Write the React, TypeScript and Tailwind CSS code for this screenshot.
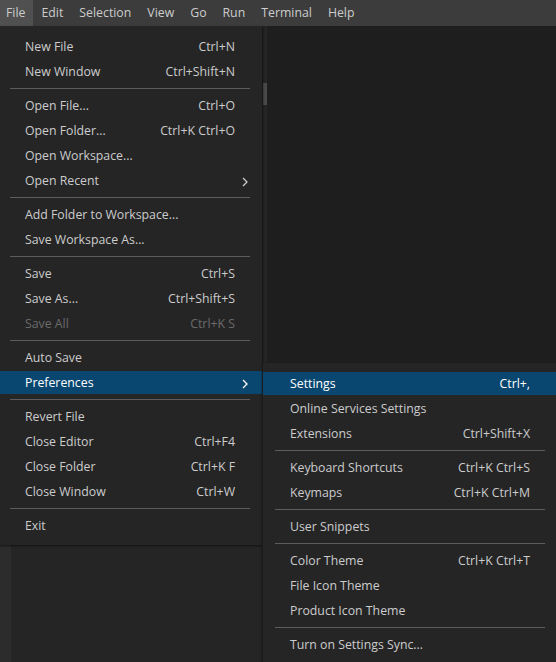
import React from 'react'

type Item =
  | { sep: true }
  | { label: string; keys?: string; sub?: boolean; active?: boolean; disabled?: boolean }

const FONT = '"Open Sans", "Noto Sans", sans-serif'

const menuBar = ['File', 'Edit', 'Selection', 'View', 'Go', 'Run', 'Terminal', 'Help']

const fileMenu: Item[] = [
  { label: 'New File', keys: 'Ctrl+N' },
  { label: 'New Window', keys: 'Ctrl+Shift+N' },
  { sep: true },
  { label: 'Open File...', keys: 'Ctrl+O' },
  { label: 'Open Folder...', keys: 'Ctrl+K Ctrl+O' },
  { label: 'Open Workspace...' },
  { label: 'Open Recent', sub: true },
  { sep: true },
  { label: 'Add Folder to Workspace...' },
  { label: 'Save Workspace As...' },
  { sep: true },
  { label: 'Save', keys: 'Ctrl+S' },
  { label: 'Save As...', keys: 'Ctrl+Shift+S' },
  { label: 'Save All', keys: 'Ctrl+K S', disabled: true },
  { sep: true },
  { label: 'Auto Save' },
  { label: 'Preferences', sub: true, active: true },
  { sep: true },
  { label: 'Revert File' },
  { label: 'Close Editor', keys: 'Ctrl+F4' },
  { label: 'Close Folder', keys: 'Ctrl+K F' },
  { label: 'Close Window', keys: 'Ctrl+W' },
  { sep: true },
  { label: 'Exit' },
]

const prefsMenu: Item[] = [
  { label: 'Settings', keys: 'Ctrl+,', active: true },
  { label: 'Online Services Settings' },
  { label: 'Extensions', keys: 'Ctrl+Shift+X' },
  { sep: true },
  { label: 'Keyboard Shortcuts', keys: 'Ctrl+K Ctrl+S' },
  { label: 'Keymaps', keys: 'Ctrl+K Ctrl+M' },
  { sep: true },
  { label: 'User Snippets' },
  { sep: true },
  { label: 'Color Theme', keys: 'Ctrl+K Ctrl+T' },
  { label: 'File Icon Theme' },
  { label: 'Product Icon Theme' },
  { sep: true },
  { label: 'Turn on Settings Sync...' },
]

function Chevron() {
  return (
    <svg width="6" height="10" viewBox="0 0 6 10" fill="none">
      <path d="M1 1 L5 5 L1 9" stroke="currentColor" strokeWidth="1.3" />
    </svg>
  )
}

function MenuRows({ items }: { items: Item[] }) {
  return (
    <>
      {items.map((item, i) => {
        if ('sep' in item) {
          return (
            <div key={i} className="flex h-[9px] items-center px-[12px]">
              <div className="h-px w-full bg-[#5c5c5c]" />
            </div>
          )
        }
        const tone = item.disabled ? 'text-[#6b6b6b]' : item.active ? 'text-white' : 'text-[#cccccc]'
        return (
          <div key={i} className="h-[25px] py-px">
            <div
              className={`flex h-full items-center pl-[27px] pr-[14px] pt-[2px] ${tone} ${
                item.active ? 'bg-[#094771]' : ''
              }`}
            >
              <span className="flex-1 whitespace-nowrap">{item.label}</span>
              {item.keys && <span className="mr-[7px] whitespace-nowrap">{item.keys}</span>}
              <span className="flex w-[6px] items-center">{item.sub && <Chevron />}</span>
            </div>
          </div>
        )
      })}
    </>
  )
}

export default function App() {
  return (
    <div
      className="relative flex h-[662px] w-[556px] flex-col overflow-hidden bg-[#1e1e1e] text-[12.3px]"
      style={{ fontFamily: FONT }}
    >
      {/* Title / menu bar */}
      <div className="flex h-[26px] shrink-0 bg-[#3c3c3c] text-[#cccccc]">
        <div className="-ml-[2px] flex">
          {menuBar.map((m, i) => (
            <div
              key={m}
              className={`flex h-[26px] items-center px-[8px] pt-px ${i === 0 ? 'bg-[#505050]' : ''}`}
            >
              {m}
            </div>
          ))}
        </div>
      </div>

      {/* Workbench */}
      <div className="flex flex-1">
        <div className="w-[11px] bg-[#2c2c2c]" />
        <div className="relative w-[256px] bg-[#252526]">
          <div className="absolute right-0 top-[57px] h-[22px] w-[4px] bg-[#4a4a4c]" />
        </div>
        <div className="flex-1 bg-[#1e1e1e]" />
      </div>

      {/* File menu */}
      <div className="absolute left-[-2px] top-[26px] w-[264px] bg-[#252526] pb-[7px] pt-[8px] shadow-[1px_1px_2px_rgba(0,0,0,0.55)]">
        <MenuRows items={fileMenu} />
      </div>

      {/* Preferences submenu */}
      <div className="absolute left-[262px] top-[363px] w-[295px] border-l border-[#1b1b1b] bg-[#252526] pb-[7px] pt-[8px] shadow-[0_1px_2px_rgba(0,0,0,0.5)]">
        <MenuRows items={prefsMenu} />
      </div>
    </div>
  )
}
